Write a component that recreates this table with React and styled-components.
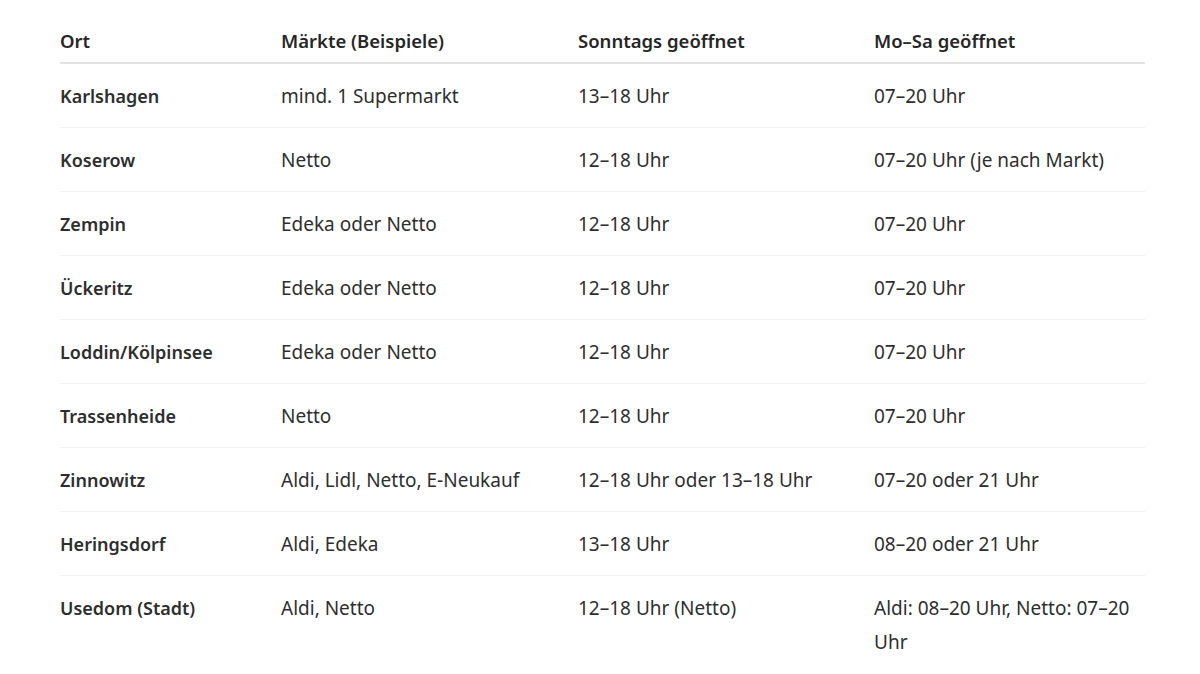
import React from "react";
import styled, { createGlobalStyle } from "styled-components";

const rows = [
  ["Karlshagen", "mind. 1 Supermarkt", "13–18 Uhr", "07–20 Uhr"],
  ["Koserow", "Netto", "12–18 Uhr", "07–20 Uhr (je nach Markt)"],
  ["Zempin", "Edeka oder Netto", "12–18 Uhr", "07–20 Uhr"],
  ["Ückeritz", "Edeka oder Netto", "12–18 Uhr", "07–20 Uhr"],
  ["Loddin/Kölpinsee", "Edeka oder Netto", "12–18 Uhr", "07–20 Uhr"],
  ["Trassenheide", "Netto", "12–18 Uhr", "07–20 Uhr"],
  ["Zinnowitz", "Aldi, Lidl, Netto, E-Neukauf", "12–18 Uhr oder 13–18 Uhr", "07–20 oder 21 Uhr"],
  ["Heringsdorf", "Aldi, Edeka", "13–18 Uhr", "08–20 oder 21 Uhr"],
  ["Usedom (Stadt)", "Aldi, Netto", "12–18 Uhr (Netto)", "Aldi: 08–20 Uhr, Netto: 07–20 Uhr"],
];

const App = () => {
  return (
    <>
      <GlobalStyle />
      <Page>
        <Table>
          <colgroup>
            <col style={{ width: 221 }} />
            <col style={{ width: 297 }} />
            <col style={{ width: 296 }} />
            <col style={{ width: 271 }} />
          </colgroup>
          <thead>
            <tr>
              <HeadCell>Ort</HeadCell>
              <HeadCell>Märkte (Beispiele)</HeadCell>
              <HeadCell>Sonntags geöffnet</HeadCell>
              <HeadCell>Mo–Sa geöffnet</HeadCell>
            </tr>
          </thead>
          <tbody>
            {rows.map((r, i) => (
              <Row key={r[0]} $last={i === rows.length - 1}>
                <Cell $strong>{r[0]}</Cell>
                <Cell>{r[1]}</Cell>
                <Cell>{r[2]}</Cell>
                <Cell>{r[3]}</Cell>
              </Row>
            ))}
          </tbody>
        </Table>
      </Page>
    </>
  );
};

export default App;

const GlobalStyle = createGlobalStyle`
  body {
    margin: 0;
    background: #fff;
    font-family: "Noto Sans", "Open Sans", sans-serif;
  }
`;

const Page = styled.div`
  width: 1200px;
  height: 674px;
  overflow: hidden;
  padding: 24px 55px 0 60px;
  box-sizing: border-box;
`;

const Table = styled.table`
  width: 1085px;
  border-collapse: collapse;
  table-layout: fixed;
`;

const HeadCell = styled.th`
  text-align: left;
  padding: 0 0 4px;
  font-size: 18.5px;
  font-weight: 600;
  line-height: 34px;
  color: #262626;
  border-bottom: 2px solid #e2e2e2;
`;

const Row = styled.tr`
  border-bottom: ${(p) => (p.$last ? "none" : "1px solid #f1f1f1")};
`;

const Cell = styled.td`
  padding: 15px 4px 14px 0;
  font-size: ${(p) => (p.$strong ? "18px" : "19px")};
  line-height: 34px;
  vertical-align: top;
  color: #2e2e2e;
  font-weight: ${(p) => (p.$strong ? 600 : 400)};
`;
